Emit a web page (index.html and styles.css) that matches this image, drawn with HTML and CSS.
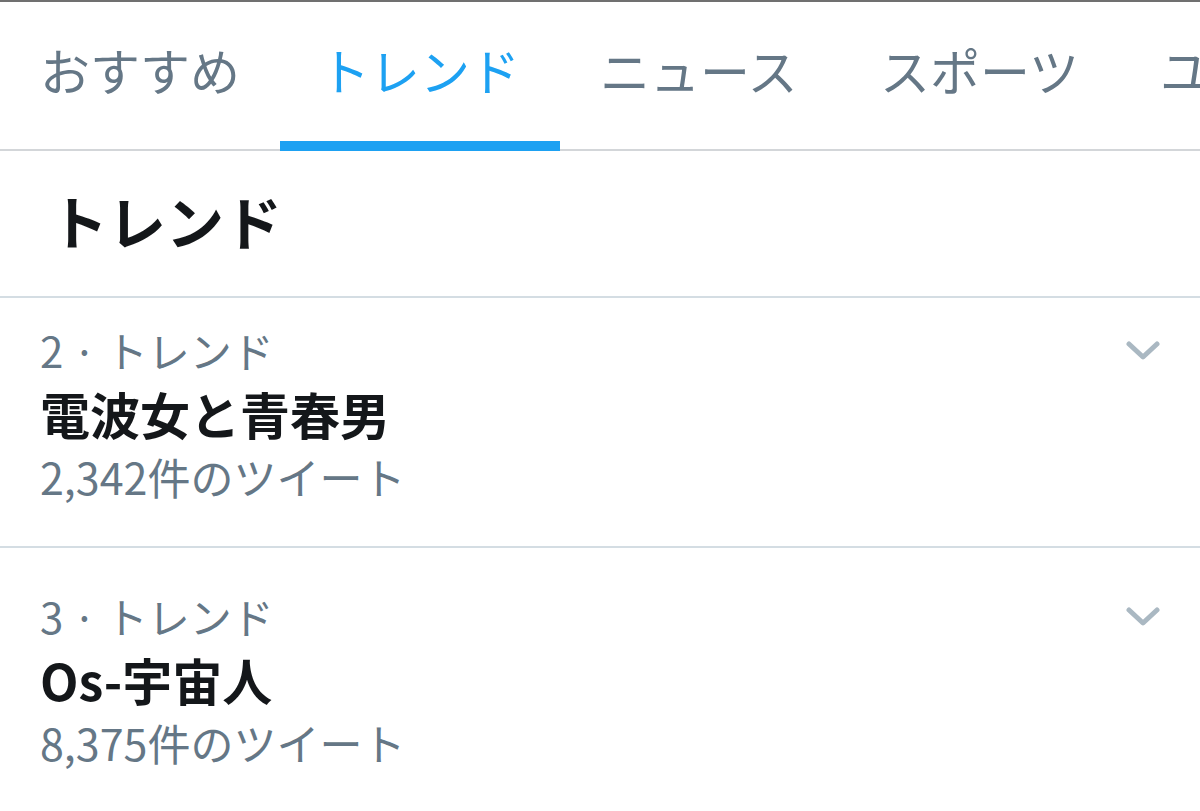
FILE: index.html
```html
<!DOCTYPE html>
<html lang="ja">
<head>
<meta charset="utf-8">
<title>トレンド</title>
<link rel="stylesheet" href="styles.css">
</head>
<body>
<div class="page">
  <nav class="tabs">
    <div class="tab">おすすめ</div>
    <div class="tab tab--active">トレンド</div>
    <div class="tab">ニュース</div>
    <div class="tab">スポーツ</div>
    <div class="tab">ユーモア</div>
  </nav>
  <header class="section-header">
    <h1 class="section-title">トレンド</h1>
  </header>
  <section class="trend trend--first">
    <div class="trend-meta">
      <span>2 · トレンド</span>
      <svg class="chevron" width="34" height="19" viewBox="0 0 34 19"><path d="M3 3 L17 16 L31 3" fill="none" stroke="#aab8c2" stroke-width="5" stroke-linecap="round" stroke-linejoin="round"/></svg>
    </div>
    <div class="trend-name">電波女と青春男</div>
    <div class="trend-count">2,342件のツイート</div>
  </section>
  <section class="trend">
    <div class="trend-meta">
      <span>3 · トレンド</span>
      <svg class="chevron" width="34" height="19" viewBox="0 0 34 19"><path d="M3 3 L17 16 L31 3" fill="none" stroke="#aab8c2" stroke-width="5" stroke-linecap="round" stroke-linejoin="round"/></svg>
    </div>
    <div class="trend-name">Os-宇宙人</div>
    <div class="trend-count">8,375件のツイート</div>
  </section>
</div>
</body>
</html>
```

FILE: styles.css
```css
* { box-sizing: border-box; }
html, body { margin: 0; padding: 0; background: #fff; }
body {
  width: 1200px;
  height: 811px;
  overflow: hidden;
  font-family: "Noto Sans CJK JP", "Noto Sans", sans-serif;
  color: #14171a;
}
.page {
  border-top: 2px solid #707070;
}
.tabs {
  display: flex;
  overflow: hidden;
  white-space: nowrap;
}
.tab {
  flex-shrink: 0;
  width: 280px;
  height: 149px;
  padding: 34px 0 0 40px;
  font-size: 50px;
  line-height: 66px;
  color: #657786;
  border-bottom: 2px solid #d3d6d9;
}
.tab--active {
  color: #1da1f2;
  border-bottom: 10px solid #1da1f2;
}
.section-header {
  padding: 34px 0 41px 50px;
  border-bottom: 2px solid #d4dde3;
}
.section-title {
  margin: 0;
  font-size: 58px;
  line-height: 70px;
  font-weight: 700;
  color: #14171a;
}
.trend {
  padding: 38px 40px 40px 40px;
  border-bottom: 2px solid #d4dde3;
}
.trend--first {
  padding-top: 22px;
}
.trend-meta {
  display: flex;
  justify-content: space-between;
  align-items: center;
  font-size: 42px;
  line-height: 60px;
  color: #657786;
}
.chevron {
  display: block;
}
.trend-name {
  font-size: 50px;
  line-height: 66px;
  font-weight: 700;
  color: #14171a;
}
.trend-count {
  font-size: 43px;
  line-height: 60px;
  color: #657786;
}
```
